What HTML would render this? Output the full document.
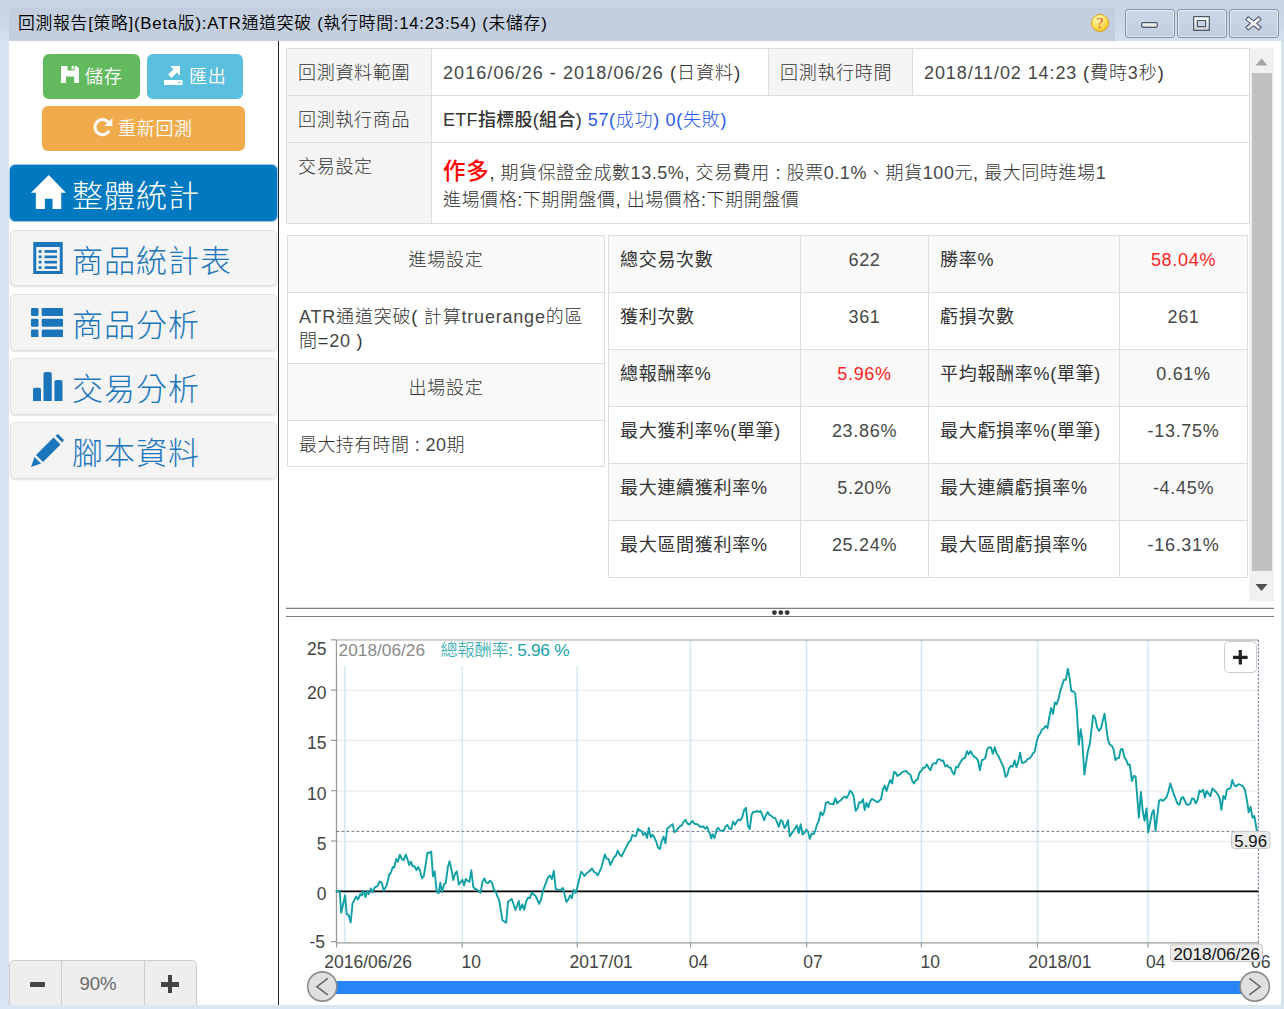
<!DOCTYPE html>
<html lang="zh-Hant"><head><meta charset="utf-8"><title>回測報告</title>
<style>
*{box-sizing:border-box}
html,body{margin:0;padding:0}
body{width:1284px;height:1009px;position:relative;overflow:hidden;background:#d8e4f2;
 font-family:"Liberation Sans","Noto Sans CJK TC",sans-serif;color:#333;font-size:18px;letter-spacing:.7px;font-weight:300;line-height:26.7px}
.abs{position:absolute}
#frametop{left:0;top:0;width:1284px;height:41px;background:linear-gradient(#c7d4e4,#c9d7e7 50%,#d3e0ef)}
#titlebar{left:9px;top:7px;width:1106px;height:34px;background:#c3cfde}
#title{left:18px;top:10px;font-size:16.8px;letter-spacing:.75px;line-height:28px;color:#000;white-space:nowrap;font-weight:350}
.wbtn{top:9px;width:50px;height:29px;border:1px solid #8695b1;border-radius:3px;background:linear-gradient(#cbd8e8,#c0cee0);box-shadow:inset 0 0 0 1px rgba(255,255,255,.45)}
#content{left:9px;top:41px;width:1272px;height:964px;background:#fff}
#vdiv{left:278px;top:41px;width:1px;height:964px;background:#222}
.btn{color:#fff;border-radius:6px;text-align:center;white-space:nowrap;font-size:18px;font-weight:350}
.nav{left:10px;width:267px;height:57px;border-radius:5px;background:#f4f4f4;border:1px solid #e2e2e2;box-shadow:0 1px 2px rgba(0,0,0,.12);color:#1b75bb}
.nav.act{background:#0079c1;border-color:#0079c1;color:#fff;box-shadow:0 0 0 1px #9cc7ea}
.nav span{position:absolute;left:61px;top:0;font-size:31px;letter-spacing:1px;line-height:61px;white-space:nowrap;font-weight:300}
.nav svg{position:absolute}
table{border-collapse:collapse;table-layout:fixed;position:absolute}
td{border:1px solid #ddd;vertical-align:top;overflow:hidden}
#t1 td{padding:11px 11px 0 11px}
#t1 td.l{background:#f5f5f5}
.t2 td{padding:13px 11px 0 11px;line-height:23.7px}
.t2 tr.s td{background:#f9f9f9}
.t2 td.c{text-align:center}
.t2 td.b{font-weight:400}
.en{color:#474747}
.red,.red .en{color:#f22}
.blue .en{color:#2a5bea}
.blue{color:#2a5bea}
.lbl{font-family:"Liberation Sans","Noto Sans CJK TC",sans-serif;font-size:17.5px;fill:#444;letter-spacing:0;font-weight:400}
</style></head><body>
<div class="abs" id="frametop"></div>
<div class="abs" id="titlebar"></div>
<div class="abs" id="title">回測報告[策略](Beta版):ATR通道突破 (執行時間:14:23:54) (未儲存)</div>
<svg class="abs" style="left:1090px;top:13px" width="20" height="20" viewBox="0 0 20 20"><defs><radialGradient id="hg" cx="40%" cy="30%" r="75%"><stop offset="0" stop-color="#fff8c0"/><stop offset=".6" stop-color="#ffdf55"/><stop offset="1" stop-color="#f2b92a"/></radialGradient></defs><circle cx="10" cy="10" r="8.6" fill="url(#hg)" stroke="#d9a62a" stroke-width="1"/><text x="10" y="15" text-anchor="middle" style="font-family:'Liberation Serif',serif;font-size:15.5px;font-weight:400;letter-spacing:0" fill="#e4481c">?</text></svg>
<div class="abs wbtn" style="left:1125px"><svg class="abs" style="left:15px;top:12px" width="18" height="8"><defs><linearGradient id="wg" x1="0" y1="0" x2="0" y2="1"><stop offset="0" stop-color="#fff"/><stop offset="1" stop-color="#d4d4d4"/></linearGradient></defs><rect x=".7" y=".6" width="15.6" height="4.7" rx="1.2" fill="url(#wg)" stroke="#4d5868" stroke-width="1.2"/></svg></div>
<div class="abs wbtn" style="left:1177px"><svg class="abs" style="left:15px;top:6px" width="18" height="16"><path fill-rule="evenodd" d="M.7 .7H16.3V14.3H.7Z M4.4 4.5V10.6H12.6V4.5Z" fill="url(#wg)" stroke="#4d5868" stroke-width="1.2"/></svg></div>
<div class="abs wbtn" style="left:1229px"><svg class="abs" style="left:14px;top:6px" width="20" height="16" viewBox="0 0 20 16"><defs><linearGradient id="wg2" gradientUnits="userSpaceOnUse" x1="0" y1="1" x2="0" y2="14"><stop offset="0" stop-color="#fff"/><stop offset=".5" stop-color="#f4f4f4"/><stop offset="1" stop-color="#d6d6d6"/></linearGradient></defs><path d="M3.7 2.8 L15.3 12.1 M15.3 2.8 L3.7 12.1" stroke="#48526a" stroke-width="5.6" stroke-linecap="square" fill="none" transform="translate(9.5 7.45) scale(.86) translate(-9.5 -7.45)"/><path d="M3.7 2.8 L15.3 12.1 M15.3 2.8 L3.7 12.1" stroke="url(#wg2)" stroke-width="3.3" stroke-linecap="square" fill="none" transform="translate(9.5 7.45) scale(.86) translate(-9.5 -7.45)"/></svg></div>
<div class="abs" id="content"></div>
<div class="abs" id="vdiv"></div>

<div class="abs btn" style="left:43px;top:54px;width:97px;height:45px;background:#63ba5e;line-height:46px"><svg class="abs" style="left:17.6px;top:12px" width="18.2" height="17" viewBox="0 0 18.2 17"><path fill="#fff" fill-rule="evenodd" d="M0 0H15.4L18.2 2.8V17H0Z M6.5 0V4.4H13.6V0Z M5 10.5V17H13.2V10.5Z"/><rect x="10.6" y="0" width="2.1" height="3.3" fill="#fff"/></svg><span class="abs" style="left:42px;top:0">儲存</span></div>
<div class="abs btn" style="left:147px;top:54px;width:96px;height:45px;background:#5bbfde;line-height:46px"><svg class="abs" style="left:17.2px;top:12px" width="18.4" height="19" viewBox="0 0 18.4 19"><path fill="#fff" d="M0 14H18.4V19H0Z M6.3 0H16V9.7L12.9 6.6L7.6 12L4.2 8.6L9.5 3.2Z"/><rect x="14.6" y="15.6" width="1.8" height="1.8" fill="#5bc0de"/></svg><span class="abs" style="left:42px;top:0">匯出</span></div>
<div class="abs btn" style="left:42px;top:106px;width:203px;height:45px;background:#f0ac4c;line-height:46px"><svg class="abs" style="left:51px;top:11.4px" width="20" height="20" viewBox="0 0 20 20"><path fill="none" stroke="#fff" stroke-width="3" d="M16.2 13.8 A7.6 7.6 0 1 1 15.2 5"/><path fill="#fff" d="M19.3 1V9H11.3Z"/></svg><span class="abs" style="left:76px;top:0">重新回測</span></div>

<div class="abs nav act" style="top:165px;height:56px"><svg style="left:19.7px;top:9px" width="35" height="34" viewBox="0 0 34.5 33.3"><path fill="#fff" d="M17.5 0 L34.5 17.3 H29.8 V33.3 H21.2 V23.2 H13.7 V33.3 H4.8 V17.3 H0 Z"/></svg><span>整體統計</span></div>
<div class="abs nav" style="top:229.5px;height:56px"><svg style="left:22px;top:11px" width="30" height="32" viewBox="0 0 29.5 32"><path fill="#1b75bb" fill-rule="evenodd" d="M0 0H29.5V32H0Z M3 5V29H26.5V5Z"/><g fill="#1b75bb"><rect x="5.4" y="8.1" width="2.9" height="2.7"/><rect x="11.3" y="8.1" width="12.5" height="2.7"/><rect x="5.4" y="13.5" width="2.9" height="2.7"/><rect x="11.3" y="13.5" width="12.5" height="2.7"/><rect x="5.4" y="18.8" width="2.9" height="2.7"/><rect x="11.3" y="18.8" width="12.5" height="2.7"/><rect x="5.4" y="24.2" width="2.9" height="2.7"/><rect x="11.3" y="24.2" width="12.5" height="2.7"/></g></svg><span>商品統計表</span></div>
<div class="abs nav" style="top:293.5px;height:57px"><svg style="left:19.7px;top:13.5px" width="32.2" height="29.4" viewBox="0 0 32.2 29.4"><g fill="#1b75bb"><rect x="0" y="0" width="7.5" height="8" rx="1.3"/><rect x="10.7" y="0" width="21.5" height="8" rx="1.3"/><rect x="0" y="10.7" width="7.5" height="8" rx="1.3"/><rect x="10.7" y="10.7" width="21.5" height="8" rx="1.3"/><rect x="0" y="21.4" width="7.5" height="8" rx="1.3"/><rect x="10.7" y="21.4" width="21.5" height="8" rx="1.3"/></g></svg><span>商品分析</span></div>
<div class="abs nav" style="top:357.8px;height:57px"><svg style="left:22.4px;top:12.8px" width="29.5" height="29" viewBox="0 0 29.5 29"><g fill="#1b75bb"><path d="M0 29V17.5Q0 15.7 1.8 15.7H6.2Q8 15.7 8 17.5V29Z"/><path d="M10.5 29V2.2Q10.5 0 12.7 0H16.6Q18.8 0 18.8 2.2V29Z"/><path d="M21.4 29V9.8Q21.4 8 23.2 8H27.7Q29.5 8 29.5 9.8V29Z"/></g></svg><span>交易分析</span></div>
<div class="abs nav" style="top:422px;height:57px"><svg style="left:20px;top:11px" width="33" height="33" viewBox="0 0 33 33"><g fill="#1b75bb"><path d="M5 21 L22.5 3.5 L29.5 10.5 L12 28 Z"/><path d="M24.5 1.8 L27 0 L33 6 L31.2 8.5 Z"/><path d="M3.5 23 L10 29.5 L0 33 Z"/></g></svg><span>腳本資料</span></div>

<div class="abs" style="left:9px;top:960px;width:188px;height:50px;background:#eee;border:1px solid #ccc;border-radius:5px"></div>
<div class="abs" style="left:61px;top:961px;width:1px;height:44px;background:#ccc"></div>
<div class="abs" style="left:144px;top:961px;width:1px;height:44px;background:#ccc"></div>
<div class="abs" style="left:29.5px;top:982px;width:15px;height:4.5px;background:#444;border-radius:1px"></div>
<div class="abs" style="left:161px;top:982px;width:18px;height:4.5px;background:#444"></div>
<div class="abs" style="left:167.7px;top:975.2px;width:4.6px;height:18px;background:#444"></div>
<div class="abs" style="left:57px;top:971px;width:82px;text-align:center;color:#666;font-size:18.6px;letter-spacing:0;font-weight:400" id="zoomtxt">90%</div>

<div class="abs" style="left:1249px;top:48px;width:25px;height:553px;background:#f1f1f1"></div>
<div class="abs" style="left:1251.5px;top:73px;width:20.5px;height:498px;background:#c1c1c1"></div>
<svg class="abs" style="left:1249px;top:48px" width="25" height="553"><path d="M6.5 17.5 L12.5 10.5 L18.5 17.5Z" fill="#a3a3a3"/><path d="M6.5 536 L18.5 536 L12.5 543Z" fill="#505050"/></svg>

<table id="t1" style="left:286px;top:48px;width:962.5px">
<colgroup><col style="width:145px"><col style="width:337px"><col style="width:144px"><col style="width:337px"></colgroup>
<tr style="height:47px"><td class="l">回測資料範圍</td><td><span id="v1" style="letter-spacing:1.07px"><span class="en">2016/06/26</span> - <span class="en">2018/06/26</span> (日資料)</span></td><td class="l">回測執行時間</td><td><span id="v2" style="letter-spacing:.9px"><span class="en">2018/11/02</span> <span class="en">14:23</span> (費時<span class="en">3</span>秒)</span></td></tr>
<tr style="height:47px"><td class="l">回測執行商品</td><td colspan="3"><b id="v3" style="font-weight:500;letter-spacing:.3px">ETF指標股(組合)</b> <span class="blue" id="v4">57(成功) 0(失敗)</span></td></tr>
<tr style="height:81px"><td class="l">交易設定</td><td colspan="3"><div style="height:33px;line-height:36px;white-space:nowrap;letter-spacing:.57px;overflow:visible"><b class="red" style="font-size:22.5px;font-weight:500;color:#f00;letter-spacing:.7px" id="v5">作多</b><span id="v6">, 期貨保證金成數<span class="en">13.5%</span>, 交易費用 : 股票<span class="en">0.1%</span>、期貨<span class="en">100</span>元, 最大同時進場<span class="en">1</span></span></div><div style="height:26px;line-height:26px;white-space:nowrap;letter-spacing:.56px"><span id="v7">進場價格:下期開盤價, 出場價格:下期開盤價</span></div></td></tr>
</table>
<table class="t2" style="left:287px;top:235px;width:318px">
<tr class="s" style="height:57px"><td class="c">進場設定</td></tr>
<tr style="height:71px"><td style="padding-top:13px;letter-spacing:.8px"><div style="height:23.7px;line-height:23.7px;white-space:nowrap" ><span id="v8"><span class="en">ATR</span>通道突破( 計算<span class="en">truerange</span>的區</span></div><div style="height:23.7px;line-height:23.7px">間=<span class="en">20</span> )</div></td></tr>
<tr class="s" style="height:57px"><td class="c">出場設定</td></tr>
<tr style="height:46px"><td style="letter-spacing:.4px">最大持有時間 : <span class="en">20</span>期</td></tr>
</table>
<table class="t2" style="left:608px;top:235px;width:638px"><colgroup><col style="width:192px"><col style="width:128px"><col style="width:191px"><col style="width:128px"></colgroup><tr class="s" style="height:57px"><td class="b" style="white-space:nowrap">總交易次數</td><td class="c"><span class="en">622</span></td><td class="b" style="white-space:nowrap">勝率%</td><td class="c"><span class="red">58.04%</span></td></tr><tr class="" style="height:57px"><td class="b" style="white-space:nowrap">獲利次數</td><td class="c"><span class="en">361</span></td><td class="b" style="white-space:nowrap">虧損次數</td><td class="c"><span class="en">261</span></td></tr><tr class="s" style="height:57px"><td class="b" style="white-space:nowrap">總報酬率%</td><td class="c"><span class="red">5.96%</span></td><td class="b" style="white-space:nowrap">平均報酬率%(單筆)</td><td class="c"><span class="en">0.61%</span></td></tr><tr class="" style="height:57px"><td class="b" style="white-space:nowrap">最大獲利率%(單筆)</td><td class="c"><span class="en">23.86%</span></td><td class="b" style="white-space:nowrap">最大虧損率%(單筆)</td><td class="c"><span class="en">-13.75%</span></td></tr><tr class="s" style="height:57px"><td class="b" style="white-space:nowrap">最大連續獲利率%</td><td class="c"><span class="en">5.20%</span></td><td class="b" style="white-space:nowrap">最大連續虧損率%</td><td class="c"><span class="en">-4.45%</span></td></tr><tr class="" style="height:57px"><td class="b" style="white-space:nowrap">最大區間獲利率%</td><td class="c"><span class="en">25.24%</span></td><td class="b" style="white-space:nowrap">最大區間虧損率%</td><td class="c"><span class="en">-16.31%</span></td></tr></table>
<svg class="abs" style="left:0;top:0" width="1284" height="1009" viewBox="0 0 1284 1009">
<line x1="336.5" x2="1258.5" y1="841.3" y2="841.3" stroke="#ececec" stroke-width="1.3"/>
<line x1="336.5" x2="1258.5" y1="791.2" y2="791.2" stroke="#ececec" stroke-width="1.3"/>
<line x1="336.5" x2="1258.5" y1="740.3" y2="740.3" stroke="#ececec" stroke-width="1.3"/>
<line x1="336.5" x2="1258.5" y1="690.4" y2="690.4" stroke="#ececec" stroke-width="1.3"/>
<line x1="344.8" x2="344.8" y1="640" y2="942.8" stroke="#d5e7f1" stroke-width="1.5"/>
<line x1="462.2" x2="462.2" y1="640" y2="942.8" stroke="#d5e7f1" stroke-width="1.5"/>
<line x1="577.2" x2="577.2" y1="640" y2="942.8" stroke="#d5e7f1" stroke-width="1.5"/>
<line x1="690.6" x2="690.6" y1="640" y2="942.8" stroke="#d5e7f1" stroke-width="1.5"/>
<line x1="806.7" x2="806.7" y1="640" y2="942.8" stroke="#d5e7f1" stroke-width="1.5"/>
<line x1="921.3" x2="921.3" y1="640" y2="942.8" stroke="#d5e7f1" stroke-width="1.5"/>
<line x1="1037.4" x2="1037.4" y1="640" y2="942.8" stroke="#d5e7f1" stroke-width="1.5"/>
<line x1="1148" x2="1148" y1="640" y2="942.8" stroke="#d5e7f1" stroke-width="1.5"/>
<path d="M336.5 640 V942.8 H1258.5" fill="none" stroke="#999" stroke-width="1.3"/>
<path d="M336.5 640 H1258.5" fill="none" stroke="#999" stroke-width="1.2"/>
<line x1="331" x2="336.5" y1="941.6" y2="941.6" stroke="#999" stroke-width="1.2"/>
<line x1="331" x2="336.5" y1="841.0" y2="841.0" stroke="#999" stroke-width="1.2"/>
<line x1="331" x2="336.5" y1="790.7" y2="790.7" stroke="#999" stroke-width="1.2"/>
<line x1="331" x2="336.5" y1="740.4" y2="740.4" stroke="#999" stroke-width="1.2"/>
<line x1="331" x2="336.5" y1="690.1" y2="690.1" stroke="#999" stroke-width="1.2"/>
<line x1="331" x2="336.5" y1="639.8" y2="639.8" stroke="#999" stroke-width="1.2"/>
<line x1="336.5" x2="336.5" y1="942.8" y2="947.5" stroke="#999" stroke-width="1.2"/>
<line x1="462.2" x2="462.2" y1="942.8" y2="947.5" stroke="#999" stroke-width="1.2"/>
<line x1="577.2" x2="577.2" y1="942.8" y2="947.5" stroke="#999" stroke-width="1.2"/>
<line x1="690.6" x2="690.6" y1="942.8" y2="947.5" stroke="#999" stroke-width="1.2"/>
<line x1="806.7" x2="806.7" y1="942.8" y2="947.5" stroke="#999" stroke-width="1.2"/>
<line x1="921.3" x2="921.3" y1="942.8" y2="947.5" stroke="#999" stroke-width="1.2"/>
<line x1="1037.4" x2="1037.4" y1="942.8" y2="947.5" stroke="#999" stroke-width="1.2"/>
<line x1="1148" x2="1148" y1="942.8" y2="947.5" stroke="#999" stroke-width="1.2"/>
<line x1="1258.3" x2="1258.3" y1="942.8" y2="947.5" stroke="#999" stroke-width="1.2"/>
<line x1="336.5" x2="1258.5" y1="891.3" y2="891.3" stroke="#000" stroke-width="1.7"/>
<line x1="336.5" x2="1258.5" y1="831.4" y2="831.4" stroke="#74798f" stroke-width="1" stroke-dasharray="2.8 2.2"/>
<line x1="1258.4" x2="1258.4" y1="640" y2="942.8" stroke="#5a6284" stroke-width="1" stroke-dasharray="2.2 1.6" opacity=".9"/>
<polyline points="335.6,891.3 339.7,891.3 341.2,912.7 345.1,895.5 346.7,914.2 348.7,915.0 350.7,922.5 352.6,903.3 356.2,896.6 358.0,899.4 360.4,894.0 361.9,895.5 363.5,890.9 365.4,897.1 367.1,891.7 368.9,894.0 370.8,888.5 372.8,892.4 374.7,887.4 377.5,886.2 379.8,881.5 381.9,883.1 383.7,890.9 386.9,884.6 389.2,874.5 390.7,873.0 392.8,867.0 394.3,867.5 396.2,858.9 397.9,861.7 399.9,854.6 401.7,858.9 403.7,860.2 405.7,854.6 407.4,858.9 409.3,865.2 410.8,861.7 412.7,866.3 414.6,866.3 416.4,870.2 418.2,867.0 420.0,870.6 421.9,878.4 423.8,876.1 427.5,852.7 429.7,852.7 431.2,851.5 433.0,876.4 434.7,871.4 436.7,892.0 438.6,893.2 440.3,882.6 442.0,892.0 444.0,884.2 445.7,883.1 447.9,866.7 449.6,861.3 451.5,869.8 453.2,880.0 455.1,873.7 456.9,871.4 458.8,884.6 462.4,879.7 464.0,885.4 465.8,878.9 467.9,881.2 469.4,881.8 471.3,870.3 473.3,887.0 475.2,889.0 477.2,889.6 480.5,892.9 482.6,881.5 484.4,878.4 486.2,882.6 488.1,883.1 490.0,880.7 492.0,882.6 493.9,890.1 495.4,890.6 497.3,896.3 499.2,900.2 502.4,920.2 506.2,922.8 508.0,901.8 511.8,899.0 515.4,910.0 518.9,901.0 520.0,909.8 522.3,904.4 524.2,909.8 526.2,901.2 528.1,897.8 529.8,898.1 531.8,892.4 533.7,894.5 535.6,895.8 539.2,903.9 541.0,899.7 542.9,890.8 544.9,885.7 548.0,877.4 549.9,875.5 551.9,879.1 553.8,870.9 555.8,889.1 557.9,889.6 560.8,889.9 562.8,888.0 564.7,895.0 566.4,902.0 568.3,899.4 570.2,895.3 571.9,898.1 573.7,889.6 575.6,893.0 577.3,887.2 581.1,871.7 584.6,875.9 586.5,873.2 588.5,872.0 592.0,868.5 594.0,871.7 595.9,872.9 597.7,875.5 601.3,867.8 604.9,854.5 606.8,858.9 608.5,858.9 610.3,865.1 613.9,857.6 615.8,855.8 617.7,850.6 619.7,854.5 621.6,856.4 628.7,842.1 630.6,840.8 632.3,835.0 634.2,835.8 636.0,836.1 637.9,828.8 639.8,830.4 641.5,831.2 643.4,835.0 645.1,832.7 647.1,837.9 648.8,828.0 650.8,837.4 652.4,834.6 654.3,837.4 656.1,841.3 658.0,847.5 659.9,849.1 661.7,841.3 663.6,836.6 665.5,843.3 667.2,828.8 672.6,824.1 674.5,832.2 676.4,830.4 680.0,826.2 681.8,825.4 683.6,821.8 685.4,819.8 687.3,823.4 689.2,824.6 692.6,821.0 694.5,823.7 698.0,824.5 699.9,826.8 703.5,826.5 705.4,828.8 707.2,826.8 709.1,832.2 710.0,833.5 711.2,838.4 712.6,834.2 714.5,838.1 716.4,830.3 718.1,827.7 720.0,830.3 721.8,830.8 723.7,830.8 725.6,826.4 727.4,824.9 729.3,828.5 731.2,829.1 733.1,821.5 734.9,824.9 736.8,821.8 738.5,819.4 740.4,820.2 742.2,817.4 744.1,810.1 746.0,807.8 747.9,825.7 749.7,829.1 751.6,814.8 753.3,811.7 755.2,812.0 757.0,810.9 758.8,812.0 760.5,810.9 762.5,815.5 764.2,820.2 766.1,814.8 767.8,812.1 769.7,815.2 771.5,815.9 773.4,817.9 775.1,817.9 777.0,822.2 778.8,826.8 780.7,820.2 782.4,821.0 784.5,828.0 786.3,825.4 787.9,820.2 789.8,836.3 793.3,831.1 796.9,825.4 798.8,833.1 800.7,824.1 802.5,834.5 804.4,833.1 806.3,829.6 808.1,831.6 809.8,838.9 811.7,833.5 813.6,834.2 815.1,831.1 817.2,824.1 818.7,821.0 820.6,812.1 822.5,815.2 824.2,812.1 826.0,802.6 827.9,801.8 829.8,803.9 831.7,803.9 833.5,804.2 835.4,798.1 837.1,803.4 839.0,801.5 840.8,800.3 842.7,798.1 844.6,796.4 846.4,798.1 848.3,795.3 850.0,790.6 851.9,792.5 853.6,796.1 855.6,810.9 857.5,808.5 859.2,802.3 861.1,802.6 863.0,799.2 864.7,810.1 866.5,802.8 868.4,807.3 870.1,801.5 872.0,798.9 873.9,800.0 877.4,802.3 881.0,799.2 882.9,789.5 884.8,785.5 886.6,791.1 888.5,784.4 890.4,780.0 892.1,783.3 894.0,771.9 895.7,772.7 897.5,776.1 899.4,774.6 900.0,774.5 902.6,771.8 906.2,770.9 908.1,773.4 910.4,774.5 912.1,780.7 914.0,783.4 915.7,780.4 917.6,779.6 919.5,772.5 921.2,770.9 923.1,767.8 924.9,767.8 926.8,764.4 928.7,767.8 930.5,770.1 932.2,764.7 934.1,763.1 936.0,763.6 937.9,759.4 939.7,759.2 941.6,760.9 943.3,760.5 945.2,766.4 947.0,765.1 948.8,767.5 950.6,767.5 952.5,772.5 954.2,774.5 956.1,766.7 957.8,767.5 959.7,763.6 961.5,760.5 963.4,758.4 965.1,757.8 967.0,751.1 968.8,754.2 970.7,751.1 972.4,754.7 974.3,756.9 976.2,757.8 977.9,760.5 979.9,770.3 981.8,760.2 983.6,759.7 985.4,757.7 987.2,749.1 989.1,747.2 991.0,747.5 992.8,753.9 994.7,747.2 996.6,753.5 998.4,755.8 1003.6,767.5 1005.6,776.8 1007.2,775.3 1009.0,768.6 1010.9,765.9 1012.8,766.7 1014.6,760.5 1016.5,767.2 1018.4,761.2 1020.1,752.7 1022.0,762.8 1023.8,762.8 1025.7,761.6 1027.4,759.2 1029.3,758.6 1031.2,756.6 1032.9,753.5 1034.7,751.6 1036.6,742.1 1038.3,736.3 1040.2,733.5 1041.9,729.6 1043.8,728.5 1045.6,725.9 1047.5,728.2 1049.2,717.6 1051.1,708.0 1053.0,714.0 1054.8,702.4 1056.5,704.4 1058.4,699.7 1060.1,691.9 1062.0,685.7 1063.9,679.8 1065.9,679.8 1067.8,668.6 1069.5,677.1 1071.3,691.2 1073.2,691.2 1075.2,693.5 1076.9,711.4 1078.8,744.9 1080.7,729.3 1082.2,739.4 1084.4,774.5 1087.8,751.5 1089.7,744.5 1093.2,715.2 1095.1,718.0 1097.1,727.4 1099.0,730.8 1101.0,728.2 1104.5,713.7 1108.0,739.8 1109.9,744.8 1111.6,745.3 1113.5,749.2 1115.4,760.1 1117.2,758.1 1118.9,758.1 1120.8,749.2 1122.5,748.9 1124.4,757.3 1126.3,760.1 1128.1,764.8 1129.8,764.8 1131.9,781.1 1133.7,776.0 1135.6,776.4 1138.9,817.7 1140.9,792.0 1142.8,811.5 1144.6,820.8 1146.5,808.4 1148.2,832.5 1152.0,813.1 1153.7,809.9 1155.5,831.0 1159.1,800.6 1161.0,799.5 1162.9,800.9 1166.4,797.5 1168.3,792.0 1170.3,783.5 1173.9,794.4 1177.5,803.7 1179.4,804.8 1181.2,798.3 1183.1,797.0 1186.7,804.5 1188.6,804.8 1190.3,803.7 1192.1,798.3 1194.0,799.0 1195.7,803.4 1197.6,799.8 1199.5,790.5 1201.2,792.0 1203.1,789.7 1204.9,797.5 1206.6,790.9 1208.5,793.6 1210.4,796.2 1212.4,788.4 1216.0,792.0 1217.9,794.7 1219.7,798.3 1221.4,809.9 1223.3,795.9 1225.2,799.0 1226.9,789.7 1228.8,788.9 1230.5,788.1 1232.3,780.0 1234.2,785.3 1236.1,786.3 1237.9,784.5 1239.7,784.5 1241.5,785.3 1243.2,786.6 1245.1,790.5 1247.0,800.6 1248.7,812.3 1250.6,806.8 1252.4,817.7 1254.3,815.9 1256.9,831.0" fill="none" stroke="#11a0a5" stroke-width="1.9" stroke-linejoin="round"/>
<text class="lbl" x="326.5" y="655.1" text-anchor="end">25</text>
<text class="lbl" x="326.5" y="698.9" text-anchor="end">20</text>
<text class="lbl" x="326.5" y="749.2" text-anchor="end">15</text>
<text class="lbl" x="326.5" y="799.5" text-anchor="end">10</text>
<text class="lbl" x="326.5" y="849.8" text-anchor="end">5</text>
<text class="lbl" x="326.5" y="900.1" text-anchor="end">0</text>
<text class="lbl" x="325" y="947.9" text-anchor="end">-5</text>
<text class="lbl" x="324.3" y="967.6" fill="#555">2016/06/26</text>
<text class="lbl" x="461.5" y="967.6" fill="#555">10</text>
<text class="lbl" x="569.6" y="967.6" fill="#555">2017/01</text>
<text class="lbl" x="688.7" y="967.6" fill="#555">04</text>
<text class="lbl" x="803.2" y="967.6" fill="#555">07</text>
<text class="lbl" x="920.5" y="967.6" fill="#555">10</text>
<text class="lbl" x="1028.3" y="967.6" fill="#555">2018/01</text>
<text class="lbl" x="1146" y="967.6" fill="#555">04</text>
<text class="lbl" x="1251" y="967.6" fill="#555">06</text>
<rect x="337.3" y="640.8" width="262" height="25.5" fill="#fff"/>
<text class="lbl" x="338.6" y="656.3" style="fill:#8a8a8a;font-size:17.3px">2018/06/26</text>
<text class="lbl" x="440.5" y="656.3" style="fill:#17a2a8;font-size:17.3px;font-weight:300" textLength="129" lengthAdjust="spacing">總報酬率: 5.96 %</text>
<rect x="1231.5" y="831.5" width="38.5" height="17" rx="3" fill="#ececec" stroke="#c8c8c8" stroke-width="1"/>
<text class="lbl" x="1250.7" y="846.6" text-anchor="middle" style="fill:#111;font-size:16.8px">5.96</text>
<rect x="1170.5" y="944" width="92" height="17.5" rx="3" fill="#ececec" stroke="#c8c8c8" stroke-width="1"/>
<text class="lbl" x="1216.5" y="959.6" text-anchor="middle" style="fill:#111;font-size:17.3px">2018/06/26</text>
<rect x="322" y="981" width="933" height="13" fill="#2785f5"/>
<circle cx="322.25" cy="986.5" r="14.6" fill="#e0e0e0" stroke="#8c8c8c" stroke-width="1.6"/>
<path d="M327.75 978.4 L316.85 986.7 L327.75 994.9" fill="none" stroke="#666" stroke-width="1.5"/>
<circle cx="1254.8" cy="986.5" r="14.6" fill="#e0e0e0" stroke="#8c8c8c" stroke-width="1.6"/>
<path d="M1249.3 978.4 L1260.2 986.7 L1249.3 994.9" fill="none" stroke="#666" stroke-width="1.5"/>
<rect x="1224.5" y="641.5" width="32" height="31" rx="4" fill="#fff" stroke="#ccc" stroke-width="1"/>
<path d="M1233 657.3 H1247.6 M1240.3 650 V664.6" stroke="#222" stroke-width="3.2" fill="none"/>
<line x1="286" x2="1274" y1="608.4" y2="608.4" stroke="#7d7d7d" stroke-width="1.1"/>
<line x1="286" x2="1274" y1="616.5" y2="616.5" stroke="#7d7d7d" stroke-width="1.1"/>
<circle cx="774.4" cy="612.6" r="2.4" fill="#333"/>
<circle cx="780.8" cy="612.6" r="2.4" fill="#333"/>
<circle cx="787.2" cy="612.6" r="2.4" fill="#333"/>
</svg>
<div class="abs" style="left:0;top:1004.5px;width:1284px;height:5px;background:#dbe6f4"></div>
<div class="abs" style="left:1281px;top:41px;width:3px;height:968px;background:#d8e4f2"></div>
</body></html>
